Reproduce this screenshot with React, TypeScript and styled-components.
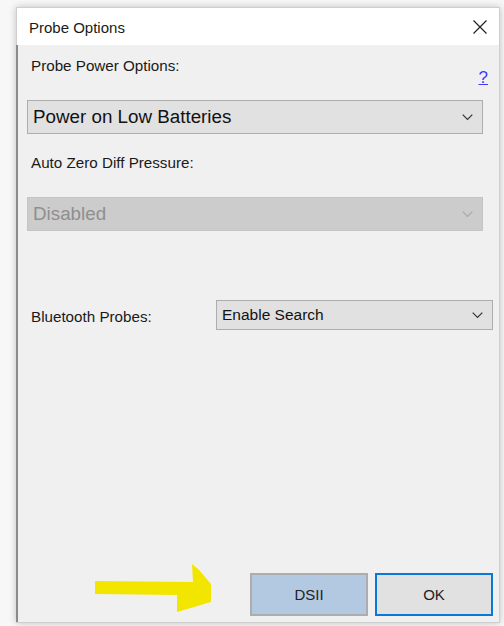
import React, { FunctionComponent } from 'react';
import styled, { createGlobalStyle } from 'styled-components';

const GlobalStyle = createGlobalStyle`
    html, body {
        margin: 0;
        padding: 0;
        background: #f7f7f7;
        font-family: "Liberation Sans", Arial, sans-serif;
    }
`;

const Page = styled.div`
    width: 504px;
    height: 626px;
    padding: 7px 4px 3px 16px;
    box-sizing: border-box;
`;

const Window = styled.div`
    position: relative;
    height: 100%;
    display: flex;
    flex-direction: column;
    border: 1px solid #cfcfcf;
    box-sizing: border-box;
    background: #f0f0f0;
    box-shadow: 0 0 7px rgba(0, 0, 0, 0.22);
`;

const TitleBar = styled.div`
    height: 37px;
    display: flex;
    align-items: center;
    justify-content: space-between;
    padding: 0 12px 0 12px;
    background: #ffffff;
`;

const Title = styled.span`
    font-size: 15px;
    color: #1a1a1a;
    margin-top: 1px;
`;

const CloseButton = styled.svg`
    width: 14px;
    height: 14px;
    margin-top: 1px;
`;

const Body = styled.div`
    flex: 1;
    display: flex;
    flex-direction: column;
    padding: 12px 16px 6px 9px;
    border-left: 2px solid #8a8a8a;
    margin-left: -1px;
`;

const LabelRow = styled.div`
    height: 43px;
    display: flex;
    justify-content: space-between;
    align-items: flex-start;
`;

const Label = styled.span`
    padding-left: 4px;
    font-size: 15.2px;
    line-height: 18px;
    color: #1a1a1a;
`;

const HelpLink = styled.a`
    margin: 11px -5px 0 0;
    font-size: 17px;
    color: #3b3bff;
    text-decoration: underline;
    cursor: pointer;
`;

interface SelectBoxProps {
    disabled?: boolean
    h: number
    fs: number
}

const SelectBox = styled.div<SelectBoxProps>`
    height: ${({ h }) => h}px;
    display: flex;
    align-items: center;
    justify-content: space-between;
    padding: 0 9px 0 5px;
    box-sizing: border-box;
    border: 1px solid ${({ disabled }) => (disabled ? '#c4c4c4' : '#adadad')};
    background: ${({ disabled }) => (disabled ? '#cccccc' : '#e1e1e1')};
    color: ${({ disabled }) => (disabled ? '#8f8f8f' : '#111111')};
    font-size: ${({ fs }) => fs}px;
`;

const Gap = styled.div<{ h: number }>`
    height: ${({ h }) => h}px;
    flex-shrink: 0;
`;

const BluetoothRow = styled.div`
    display: flex;
    align-items: center;
    margin-right: -10px;
`;

const BluetoothLabel = styled(Label)`
    width: 185px;
    padding-top: 3px;
`;

const Grow = styled.div`
    flex: 1;
`;

const ButtonRow = styled.div`
    display: flex;
    justify-content: flex-end;
    gap: 7px;
    margin-right: -10px;
`;

interface ButtonProps {
    primary?: boolean
    tinted?: boolean
}

const Button = styled.button<ButtonProps>`
    width: 118px;
    height: 43px;
    box-sizing: border-box;
    font-family: "Liberation Sans", Arial, sans-serif;
    font-size: 15px;
    color: #222;
    border: ${({ primary }) => (primary ? '2px solid #0a78d7' : '2px solid #adadad')};
    background: ${({ tinted }) => (tinted ? '#b3c8e1' : '#e1e1e1')};
    outline: none;
`;

const Arrow = styled.svg`
    position: absolute;
    left: 77px;
    top: 556px;
    width: 118px;
    height: 49px;
`;

const Chevron: FunctionComponent<{ color: string }> = ({ color }) => (
    <svg width="11" height="7" viewBox="0 0 11 7">
        <polyline points="0.7,0.7 5.5,5.5 10.3,0.7" fill="none" stroke={color} strokeWidth="1.2" />
    </svg>
);

interface DropdownProps {
    value: string
    disabled?: boolean
    h: number
    fs: number
    grow?: boolean
}

const Dropdown: FunctionComponent<DropdownProps> = ({ value, disabled, h, fs, grow }) => (
    <SelectBox disabled={disabled} h={h} fs={fs} style={grow ? { flex: 1 } : undefined}>
        <span>{value}</span>
        <Chevron color={disabled ? '#a8a8a8' : '#333'} />
    </SelectBox>
);

const App: FunctionComponent = () => {
    return (
        <Page>
            <GlobalStyle />
            <Window>
                <TitleBar>
                    <Title>Probe Options</Title>
                    <CloseButton viewBox="0 0 14 14">
                        <path d="M0.5 0.5 L13.5 13.5 M13.5 0.5 L0.5 13.5" stroke="#222" strokeWidth="1.2" />
                    </CloseButton>
                </TitleBar>

                <Body>
                    <LabelRow>
                        <Label>Probe Power Options:</Label>
                        <HelpLink>?</HelpLink>
                    </LabelRow>
                    <Dropdown value="Power on Low Batteries" h={34} fs={18.8} />

                    <Gap h={20} />
                    <LabelRow>
                        <Label>Auto Zero Diff Pressure:</Label>
                    </LabelRow>
                    <Dropdown value="Disabled" h={34} fs={18.8} disabled />

                    <Gap h={69} />
                    <BluetoothRow>
                        <BluetoothLabel>Bluetooth Probes:</BluetoothLabel>
                        <Dropdown value="Enable Search" h={30} fs={15.5} grow />
                    </BluetoothRow>

                    <Grow />
                    <ButtonRow>
                        <Button tinted>DSII</Button>
                        <Button primary>OK</Button>
                    </ButtonRow>
                </Body>

                <Arrow viewBox="0 0 118 49">
                    <polygon
                        points="1,17 99,18 98,0 105,6 117,20 117,38 83,48 83,31 1,30"
                        fill="#f2e600"
                    />
                </Arrow>
            </Window>
        </Page>
    );
};

export default App;
